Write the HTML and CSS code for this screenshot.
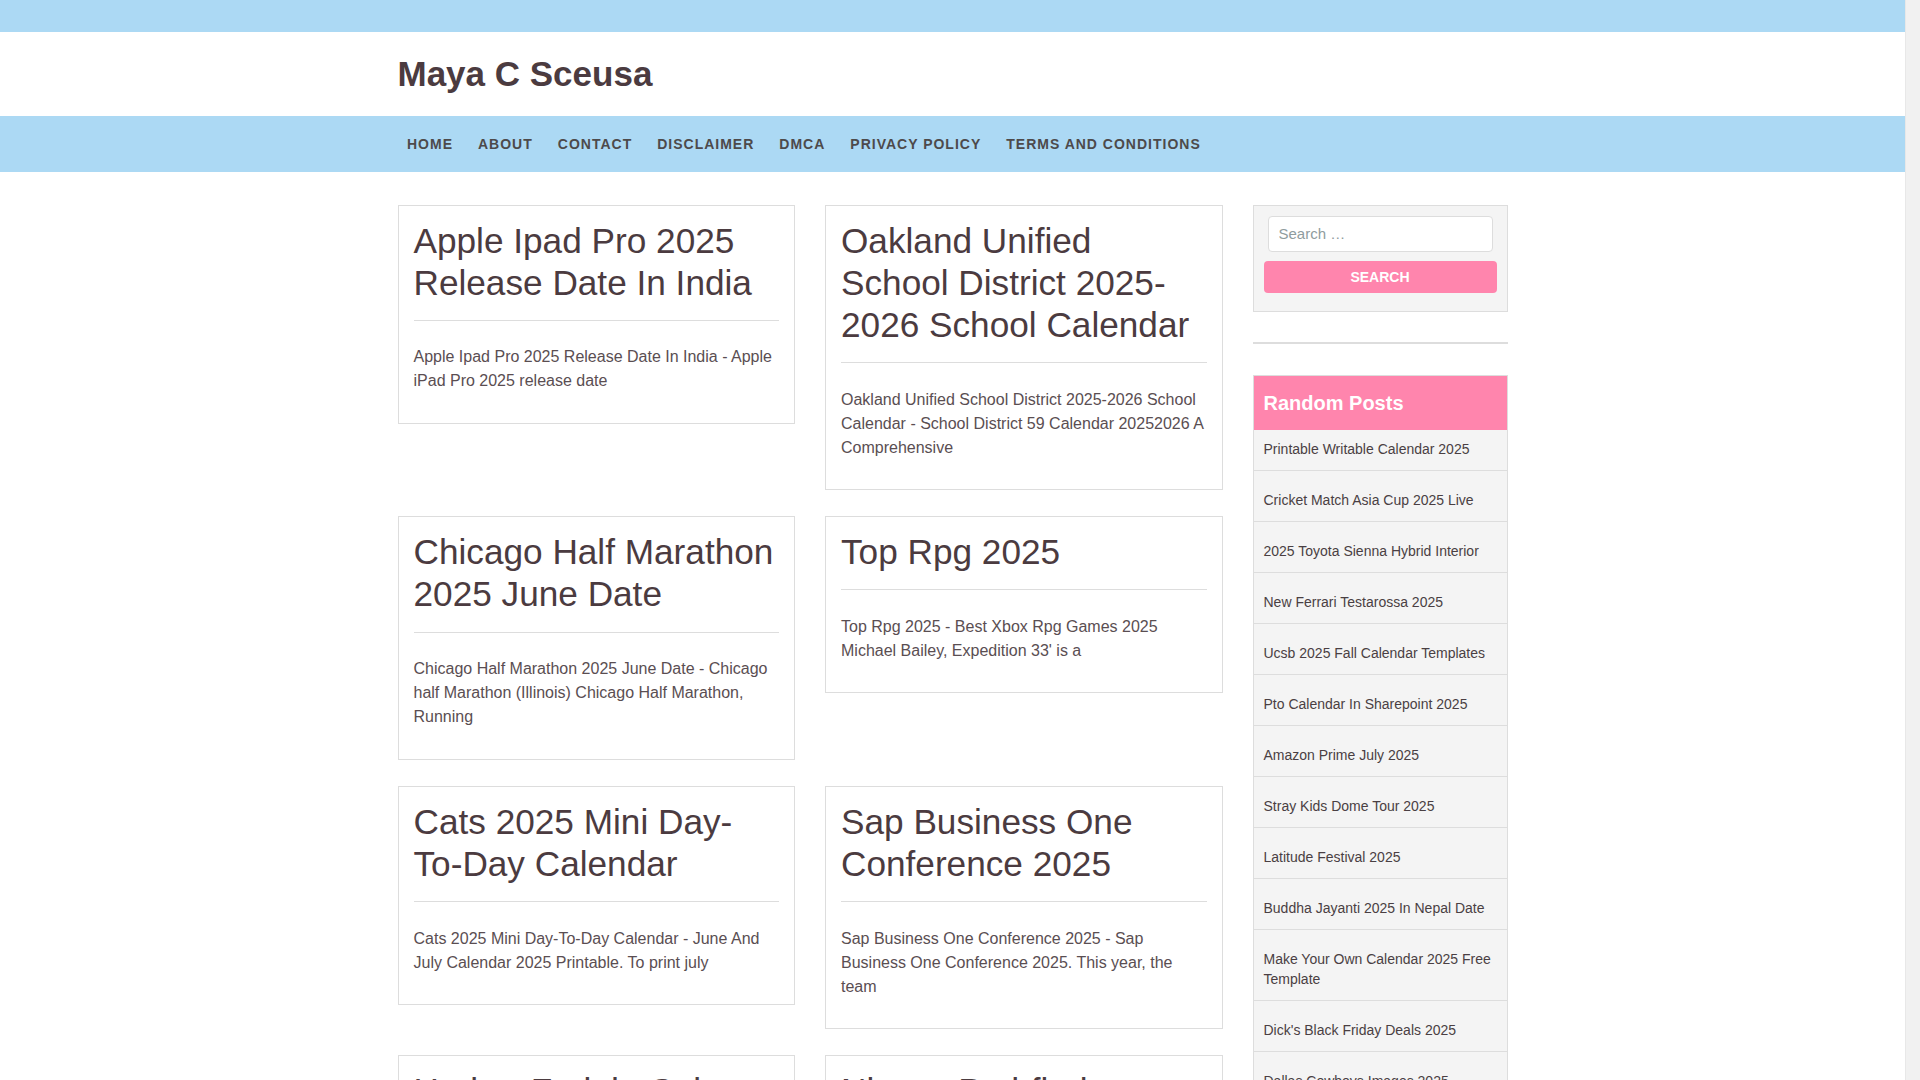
FILE: index.html
```html
<!DOCTYPE html>
<html lang="en">
<head>
<meta charset="utf-8">
<title>Maya C Sceusa</title>
<link rel="stylesheet" href="styles.css">
</head>
<body>
<div class="page">
<div class="topbar"></div>
<header class="site-header">
  <div class="container">
    <h1 class="site-title">Maya C Sceusa</h1>
  </div>
</header>
<nav class="main-nav">
  <div class="container">
    <ul class="menu">
      <li><a href="#">Home</a></li>
      <li><a href="#">About</a></li>
      <li><a href="#">Contact</a></li>
      <li><a href="#">Disclaimer</a></li>
      <li><a href="#">DMCA</a></li>
      <li><a href="#">Privacy Policy</a></li>
      <li><a href="#">Terms and Conditions</a></li>
    </ul>
  </div>
</nav>
<div class="container content">
  <main class="posts">
    <article class="card">
      <h2 class="card-title">Apple Ipad Pro 2025 Release Date In India</h2>
      <hr class="card-rule">
      <p class="card-text">Apple Ipad Pro 2025 Release Date In India - Apple iPad Pro 2025 release date</p>
    </article>
    <article class="card">
      <h2 class="card-title">Oakland Unified School District 2025-2026 School Calendar</h2>
      <hr class="card-rule">
      <p class="card-text">Oakland Unified School District 2025-2026 School Calendar - School District 59 Calendar 20252026 A Comprehensive</p>
    </article>
    <article class="card">
      <h2 class="card-title">Chicago Half Marathon 2025 June Date</h2>
      <hr class="card-rule">
      <p class="card-text">Chicago Half Marathon 2025 June Date - Chicago half Marathon (Illinois) Chicago Half Marathon, Running</p>
    </article>
    <article class="card">
      <h2 class="card-title">Top Rpg 2025</h2>
      <hr class="card-rule">
      <p class="card-text">Top Rpg 2025 - Best Xbox Rpg Games 2025 Michael Bailey, Expedition 33' is a</p>
    </article>
    <article class="card">
      <h2 class="card-title">Cats 2025 Mini Day-To-Day Calendar</h2>
      <hr class="card-rule">
      <p class="card-text">Cats 2025 Mini Day-To-Day Calendar - June And July Calendar 2025 Printable. To print july</p>
    </article>
    <article class="card">
      <h2 class="card-title">Sap Business One Conference 2025</h2>
      <hr class="card-rule">
      <p class="card-text">Sap Business One Conference 2025 - Sap Business One Conference 2025. This year, the team</p>
    </article>
    <article class="card">
      <h2 class="card-title">Harbor Freight Sales Flyer 2025</h2>
      <hr class="card-rule">
      <p class="card-text">Harbor Freight Sales Flyer 2025 - Harbor Freight Coupons 2025</p>
    </article>
    <article class="card">
      <h2 class="card-title">Nissan Pathfinder 2025</h2>
      <hr class="card-rule">
      <p class="card-text">Nissan Pathfinder 2025 - 2025 Nissan Pathfinder Review</p>
    </article>
  </main>
  <aside class="sidebar">
    <section class="search-widget">
      <form class="search-form">
        <input class="search-field" type="search" placeholder="Search …">
        <button class="search-submit" type="button">Search</button>
      </form>
    </section>
    <hr class="sidebar-rule">
    <section class="posts-widget">
      <h3 class="widget-title">Random Posts</h3>
      <ul class="post-list">
        <li><a href="#">Printable Writable Calendar 2025</a></li>
        <li><a href="#">Cricket Match Asia Cup 2025 Live</a></li>
        <li><a href="#">2025 Toyota Sienna Hybrid Interior</a></li>
        <li><a href="#">New Ferrari Testarossa 2025</a></li>
        <li><a href="#">Ucsb 2025 Fall Calendar Templates</a></li>
        <li><a href="#">Pto Calendar In Sharepoint 2025</a></li>
        <li><a href="#">Amazon Prime July 2025</a></li>
        <li><a href="#">Stray Kids Dome Tour 2025</a></li>
        <li><a href="#">Latitude Festival 2025</a></li>
        <li><a href="#">Buddha Jayanti 2025 In Nepal Date</a></li>
        <li><a href="#">Make Your Own Calendar 2025 Free Template</a></li>
        <li><a href="#">Dick's Black Friday Deals 2025</a></li>
        <li><a href="#">Dallas Cowboys Images 2025</a></li>
        <li><a href="#">Jeep Grand Cherokee 2025 Colors</a></li>
      </ul>
    </section>
  </aside>
</div>
</div>
<div class="scrollbar-track"></div>
</body>
</html>
```
FILE: styles.css
```css
* { box-sizing: border-box; }

html, body {
  margin: 0;
  padding: 0;
  background: #ffffff;
  font-family: "Liberation Sans", Arial, sans-serif;
  color: #5a4e52;
}

.page {
  margin-right: 15px;
}

.scrollbar-track {
  position: fixed;
  top: 0;
  right: 0;
  width: 15px;
  height: 100%;
  background: #f1f1f1;
  border-left: 1px solid #e8e8e8;
}

.container {
  width: 1110px;
  margin: 0 auto;
}

.topbar {
  height: 32px;
  background: #acd9f4;
}

.site-header {
  background: #ffffff;
  padding: 22px 0 22px;
}

.site-title {
  margin: 0;
  font-size: 35px;
  line-height: 40px;
  font-weight: 700;
  color: #4b3b40;
}

.main-nav {
  background: #acd9f4;
  height: 56px;
}

.menu {
  display: flex;
  list-style: none;
  margin: 0 0 0 -3px;
  padding: 0;
}

.menu a {
  display: block;
  padding: 0 12.5px;
  line-height: 56px;
  font-size: 14px;
  font-weight: 700;
  letter-spacing: 1px;
  text-transform: uppercase;
  color: #4d4a4b;
  text-decoration: none;
}

.content {
  display: flex;
  gap: 30px;
  padding-top: 32.5px;
  align-items: flex-start;
}

.posts {
  width: 825px;
  display: grid;
  grid-template-columns: 1fr 1fr;
  column-gap: 30px;
  row-gap: 26px;
  align-items: start;
}

.card {
  border: 1px solid #dddddd;
  background: #ffffff;
  padding: 14px 15px 29.5px;
}

.card-title {
  margin: 0;
  font-size: 35.2px;
  line-height: 1.2;
  font-weight: 400;
  color: #4b3b40;
}

.card-rule {
  border: none;
  border-top: 1px solid #dddddd;
  height: 0;
  margin: 16px 0 24.5px;
}

.card-text {
  margin: 0;
  font-size: 16px;
  line-height: 24px;
  color: #5a4e52;
}

.sidebar {
  width: 255px;
}

.search-widget {
  background: #f4f4f4;
  border: 1px solid #dddddd;
  padding: 10px 10px 18px;
}

.search-form {
  display: flex;
  flex-direction: column;
}

.search-field {
  margin: 0 4px;
  height: 36px;
  border: 1px solid #dddddd;
  border-radius: 4px;
  background: #ffffff;
  padding: 0 10px;
  font-family: "Liberation Sans", Arial, sans-serif;
  font-size: 15px;
  color: #555;
  outline: none;
}

.search-field::placeholder {
  color: #8f9c9e;
}

.search-submit {
  margin-top: 9px;
  height: 32px;
  border: none;
  border-radius: 4px;
  background: #ff85ad;
  color: #ffffff;
  font-family: "Liberation Sans", Arial, sans-serif;
  font-size: 14px;
  font-weight: 700;
  text-transform: uppercase;
  padding: 0;
}

.sidebar-rule {
  border: none;
  height: 2px;
  background: #dddddd;
  margin: 30px 0 31px;
}

.posts-widget {
  border: 1px solid #dddddd;
  background: #f4f4f4;
}

.widget-title {
  margin: 0;
  background: #ff85ad;
  color: #ffffff;
  font-size: 20px;
  font-weight: 700;
  line-height: 54px;
  padding: 0 10px;
}

.post-list {
  list-style: none;
  margin: 0;
  padding: 0;
}

.post-list li {
  padding: 9px 10px 11px;
  border-bottom: 1px solid #dddddd;
  margin-bottom: 10px;
  font-size: 14px;
  line-height: 20px;
}

.post-list a {
  color: #4a3f43;
  text-decoration: none;
}
```
